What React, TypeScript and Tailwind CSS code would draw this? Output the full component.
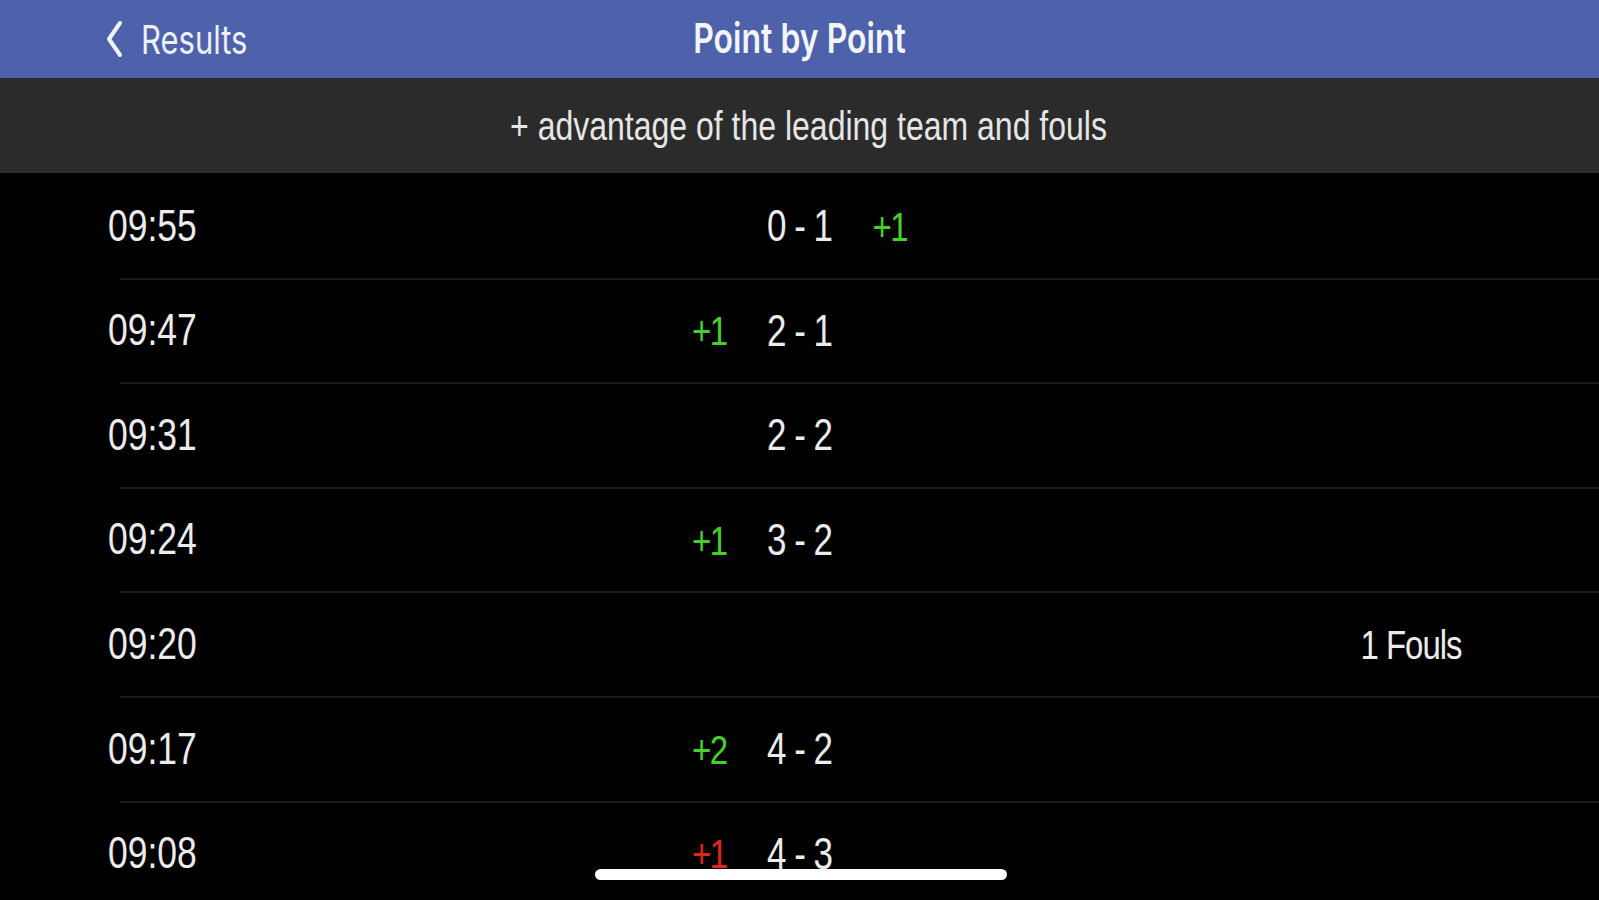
import React from "react";

type Row = {
  time: string;
  score?: string;
  left?: { text: string; color: "green" | "red" };
  right?: { text: string; color: "green" | "red" };
  fouls?: string;
};

const rows: Row[] = [
  { time: "09:55", score: "0 - 1", right: { text: "+1", color: "green" } },
  { time: "09:47", score: "2 - 1", left: { text: "+1", color: "green" } },
  { time: "09:31", score: "2 - 2" },
  { time: "09:24", score: "3 - 2", left: { text: "+1", color: "green" } },
  { time: "09:20", fouls: "1 Fouls" },
  { time: "09:17", score: "4 - 2", left: { text: "+2", color: "green" } },
  { time: "09:08", score: "4 - 3", left: { text: "+1", color: "red" } },
];

const sans = "font-['Liberation_Sans',Arial,sans-serif]";

function Adv({ text, color }: { text: string; color: "green" | "red" }) {
  return (
    <span
      className={`inline-block scale-y-[1.25] text-[33px] leading-none tracking-[-1.5px] ${sans} ${
        color === "green" ? "text-[#45d12c]" : "text-[#e2261a]"
      }`}
    >
      {text}
    </span>
  );
}

export default function App() {
  return (
    <div className="relative h-[900px] w-full overflow-hidden bg-black">
      {/* Nav bar */}
      <div className="grid h-[78px] grid-cols-[1fr_auto_1fr] items-center bg-[#4d62ab] text-white">
        <div className="flex items-center pl-[104px]">
          <svg width="22" height="40" viewBox="0 0 22 40" className="mr-[15px]">
            <path
              d="M16 4 L5 20 L16 36"
              fill="none"
              stroke="#f2f4fb"
              strokeWidth="4"
              strokeLinecap="round"
              strokeLinejoin="round"
            />
          </svg>
          <span className="inline-block scale-y-[1.28] font-['Inter',sans-serif] text-[31px] leading-none text-[#eef0f8]">
            Results
          </span>
        </div>
        <div className="text-center">
          <span className="inline-block scale-y-[1.28] font-['Inter',sans-serif] text-[32px] font-semibold leading-none text-[#f4f5fa]">
            Point by Point
          </span>
        </div>
        <div />
      </div>

      {/* Sub header */}
      <div className="flex h-[95px] items-center justify-center bg-[#2b2b2c] pl-[18px]">
        <span className={`inline-block scale-y-[1.25] text-[32px] leading-none text-[#e6e6e6] ${sans}`}>
          + advantage of the leading team and fouls
        </span>
      </div>

      {/* Rows */}
      <div className="flex flex-col pt-[2px]">
        {rows.map((r, i) => (
          <div key={i} className="flex flex-col">
            <div className="grid h-[102.6px] grid-cols-[1fr_90px_1fr] items-center">
              <div className="flex items-center justify-between pl-[108px] pr-[28px]">
                <span
                  className={`inline-block scale-y-[1.25] text-[35.5px] leading-none text-[#ececec] ${sans}`}
                >
                  {r.time}
                </span>
                {r.left ? <Adv text={r.left.text} color={r.left.color} /> : <span />}
              </div>
              <div className="text-center">
                {r.score && (
                  <span
                    className={`inline-block scale-y-[1.25] text-[35px] leading-none tracking-[-1px] text-[#ececec] ${sans}`}
                  >
                    {r.score}
                  </span>
                )}
              </div>
              <div className="flex items-center pl-[28px]">
                {r.right && <Adv text={r.right.text} color={r.right.color} />}
                {r.fouls && (
                  <div className="ml-auto w-[376px] text-center">
                    <span
                      className={`inline-block scale-y-[1.25] text-[33px] leading-none tracking-[-1px] text-[#ececec] ${sans}`}
                    >
                      {r.fouls}
                    </span>
                  </div>
                )}
              </div>
            </div>
            <div className="ml-[120px] h-[2px] bg-[#1b1b1b]" />
          </div>
        ))}
      </div>

      {/* Home indicator */}
      <div className="absolute left-[595px] top-[869px] h-[11px] w-[412px] rounded-full bg-white" />
    </div>
  );
}
